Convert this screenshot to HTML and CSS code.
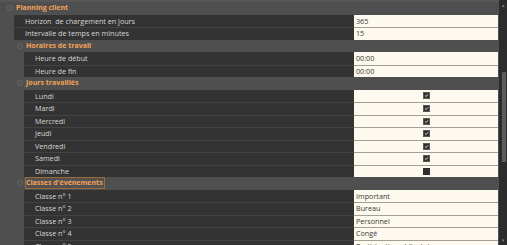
FILE: index.html
```html
<!DOCTYPE html>
<html lang="fr">
<head>
  <meta charset="UTF-8">
  <title>Planning client</title>
  <link rel="stylesheet" href="styles.css">
</head>
<body>

<div class="prop-grid">
  <div class="prop-list">
    <div class="top-strip"></div>

    <div class="cat lvl0">
      <svg class="toggle" viewBox="0 0 6 6"><circle cx="3" cy="3" r="2.6"/><polyline points="1.8,3.6 3,2.4 4.2,3.6"/></svg>
      <span class="cat-name">Planning client</span>
    </div>
    <div class="row lvl1"><div class="name">Horizon&nbsp; de chargement en jours</div><div class="value">365</div></div>
    <div class="row lvl1"><div class="name">Intervalle de temps en minutes</div><div class="value">15</div></div>

    <div class="cat lvl1">
      <svg class="toggle" viewBox="0 0 6 6"><circle cx="3" cy="3" r="2.6"/><polyline points="1.8,3.6 3,2.4 4.2,3.6"/></svg>
      <span class="cat-name">Horaires de travail</span>
    </div>
    <div class="row lvl2"><div class="name">Heure de début</div><div class="value">00:00</div></div>
    <div class="row lvl2"><div class="name">Heure de fin</div><div class="value">00:00</div></div>

    <div class="cat lvl1">
      <svg class="toggle" viewBox="0 0 6 6"><circle cx="3" cy="3" r="2.6"/><polyline points="1.8,3.6 3,2.4 4.2,3.6"/></svg>
      <span class="cat-name">Jours travaillés</span>
    </div>
    <div class="row lvl2"><div class="name">Lundi</div><div class="value center"><span class="check on"><svg viewBox="0 0 7 7"><polyline points="1.5,3.6 3,5 5.6,1.8"/></svg></span></div></div>
    <div class="row lvl2"><div class="name">Mardi</div><div class="value center"><span class="check on"><svg viewBox="0 0 7 7"><polyline points="1.5,3.6 3,5 5.6,1.8"/></svg></span></div></div>
    <div class="row lvl2"><div class="name">Mercredi</div><div class="value center"><span class="check on"><svg viewBox="0 0 7 7"><polyline points="1.5,3.6 3,5 5.6,1.8"/></svg></span></div></div>
    <div class="row lvl2"><div class="name">Jeudi</div><div class="value center"><span class="check on"><svg viewBox="0 0 7 7"><polyline points="1.5,3.6 3,5 5.6,1.8"/></svg></span></div></div>
    <div class="row lvl2"><div class="name">Vendredi</div><div class="value center"><span class="check on"><svg viewBox="0 0 7 7"><polyline points="1.5,3.6 3,5 5.6,1.8"/></svg></span></div></div>
    <div class="row lvl2"><div class="name">Samedi</div><div class="value center"><span class="check on"><svg viewBox="0 0 7 7"><polyline points="1.5,3.6 3,5 5.6,1.8"/></svg></span></div></div>
    <div class="row lvl2"><div class="name">Dimanche</div><div class="value center"><span class="check"></span></div></div>

    <div class="cat lvl1">
      <svg class="toggle" viewBox="0 0 6 6"><circle cx="3" cy="3" r="2.6"/><polyline points="1.8,3.6 3,2.4 4.2,3.6"/></svg>
      <span class="cat-name selected">Classes d'événements</span>
    </div>
    <div class="row lvl2"><div class="name">Classe n° 1</div><div class="value">Important</div></div>
    <div class="row lvl2"><div class="name">Classe n° 2</div><div class="value">Bureau</div></div>
    <div class="row lvl2"><div class="name">Classe n° 3</div><div class="value">Personnel</div></div>
    <div class="row lvl2"><div class="name">Classe n° 4</div><div class="value">Congé</div></div>
    <div class="row lvl2"><div class="name">Classe n° 5</div><div class="value">Participation obligatoire</div></div>
  </div>

  <div class="scrollbar">
    <span class="arrow">&#9652;</span>
    <div class="thumb"></div>
    <span class="arrow bottom">&#9662;</span>
  </div>
</div>

</body>
</html>
```

FILE: styles.css
```css
html, body {
  margin: 0;
  padding: 0;
  height: 100%;
  overflow: hidden;
}

body {
  background: #4f4f4f;
  font-family: 'Open Sans', sans-serif;
  font-size: 7.2px;
}

.prop-grid {
  display: flex;
  height: 245px;
}

.prop-list {
  width: 499px;
  overflow: hidden;
}

.top-strip {
  height: 2px;
  background: #575757;
}

/* categories */
.cat {
  display: flex;
  align-items: center;
  height: 12.5px;
  box-sizing: border-box;
}

.cat.lvl0 {
  padding-left: 7px;
}

.cat.lvl1 {
  padding-left: 17px;
}

.toggle {
  width: 6px;
  height: 6px;
  margin-right: 2px;
  fill: none;
  stroke: #6c6c6c;
  stroke-width: 0.7;
}

.cat-name {
  color: #f3a35a;
  font-weight: bold;
  font-size: 7px;
  line-height: 10px;
  padding-right: 1px;
  border: 1px solid transparent;
}

.cat-name.selected {
  border-color: #9a6c3c;
  background: #535150;
}

/* rows */
.row {
  display: flex;
  height: 12.5px;
  box-sizing: border-box;
}

.row .name {
  flex: 1;
  background: #333333;
  color: #d6d6d6;
  line-height: 12px;
  white-space: nowrap;
  overflow: hidden;
}

.row.lvl1 .name {
  margin-left: 14px;
  padding-left: 11px;
}

.row.lvl2 .name {
  margin-left: 24px;
  padding-left: 11px;
}

.row .value {
  width: 144px;
  margin-right: 1px;
  background: #fdf9ee;
  color: #3a3a3a;
  padding-left: 2px;
  box-sizing: border-box;
  line-height: 12px;
  white-space: nowrap;
  overflow: hidden;
}

.row + .row .name {
  border-top: 1px solid #424242;
  line-height: 11px;
}

.row + .row .value {
  border-top: 1px solid #a19f98;
  line-height: 11px;
}

.value.center {
  display: flex;
  align-items: center;
  justify-content: center;
  padding-left: 0;
}

.check {
  width: 7px;
  height: 7px;
  box-sizing: border-box;
  background: #2f2f2f;
  border: 1px solid #5a5a5a;
  display: flex;
}

.check svg {
  width: 100%;
  height: 100%;
  fill: none;
  stroke: #f2f2f2;
  stroke-width: 1.2;
}

.check:not(.on) {
  border-color: #2f2f2f;
}

/* scrollbar */
.scrollbar {
  width: 8px;
  background: #2c2c2c;
  display: flex;
  flex-direction: column;
  align-items: center;
}

.arrow {
  color: #8a8a8a;
  font-size: 5px;
  line-height: 6px;
  height: 6px;
  margin-top: 2px;
}

.arrow.bottom {
  margin-top: auto;
  margin-bottom: 2px;
}

.thumb {
  width: 4px;
  height: 90px;
  margin-top: 64px;
  margin-left: 2px;
  background: #5c5c5c;
}
```
